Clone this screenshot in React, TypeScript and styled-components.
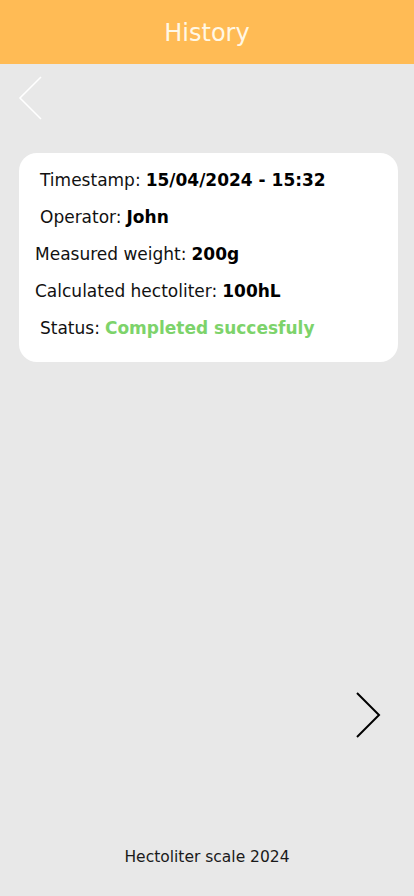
import React from 'react';
import styled, { createGlobalStyle } from 'styled-components';

const GlobalStyle = createGlobalStyle`
  html, body {
    margin: 0;
    padding: 0;
    background: #e8e8e8;
    font-family: "DejaVu Sans", "Open Sans", sans-serif;
  }
  #root {
    min-height: 100vh;
  }
`;

const Page = styled.main`
  display: flex;
  flex-direction: column;
  height: 896px;
  background: #e8e8e8;
`;

const Header = styled.header`
  height: 64px;
  padding-top: 1px;
  box-sizing: border-box;
  background: #ffbb55;
  display: flex;
  align-items: center;
  justify-content: center;
  color: #fff8e6;
  font-size: 24px;
`;

const NavRow = styled.div<{ $align: 'start' | 'end' }>`
  display: flex;
  justify-content: ${(p) => (p.$align === 'start' ? 'flex-start' : 'flex-end')};
  padding: ${(p) => (p.$align === 'start' ? '12px 0 0 18px' : '0 33px 0 0')};
  margin-bottom: ${(p) => (p.$align === 'end' ? '108px' : '0')};
`;

const Chevron = styled.svg`
  display: block;
`;

const Card = styled.section`
  margin: 33px 16px 0 19px;
  background: #fff;
  border-radius: 18px;
  padding: 8px 0 16px;
  display: flex;
  flex-direction: column;
`;

const Row = styled.div<{ $indent: number }>`
  height: 37px;
  display: flex;
  align-items: center;
  padding-left: ${(p) => p.$indent}px;
  font-size: 17px;
  color: #111;
  white-space: nowrap;
`;

const Value = styled.b<{ $ok?: boolean }>`
  font-weight: 700;
  margin-left: 5px;
  color: ${(p) => (p.$ok ? '#7dd36b' : '#000')};
`;

const Spacer = styled.div`
  flex: 1;
`;

const Footer = styled.footer`
  height: 50px;
  line-height: 22px;
  text-align: center;
  font-size: 15.5px;
  color: #1a1a1a;
`;

const rows = [
  { label: 'Timestamp:', value: '15/04/2024 - 15:32', indent: 21 },
  { label: 'Operator:', value: 'John', indent: 21 },
  { label: 'Measured weight:', value: '200g', indent: 16 },
  { label: 'Calculated hectoliter:', value: '100hL', indent: 16 },
  { label: 'Status:', value: 'Completed succesfuly', indent: 21, ok: true },
];

export default function App() {
  return (
    <>
      <GlobalStyle />
      <Page>
        <Header>History</Header>
        <NavRow $align="start">
          <Chevron width="26" height="44" viewBox="0 0 26 44">
            <polyline points="23,1 2,22 23,43" fill="none" stroke="#fff" strokeWidth="1.6" />
          </Chevron>
        </NavRow>
        <Card>
          {rows.map((r) => (
            <Row key={r.label} $indent={r.indent}>
              {r.label}
              <Value $ok={r.ok}>{r.value}</Value>
            </Row>
          ))}
        </Card>
        <Spacer />
        <NavRow $align="end">
          <Chevron width="26" height="46" viewBox="0 0 26 46">
            <polyline points="2,1 24,23 2,45" fill="none" stroke="#000" strokeWidth="2" />
          </Chevron>
        </NavRow>
        <Footer>Hectoliter scale 2024</Footer>
      </Page>
    </>
  );
}
